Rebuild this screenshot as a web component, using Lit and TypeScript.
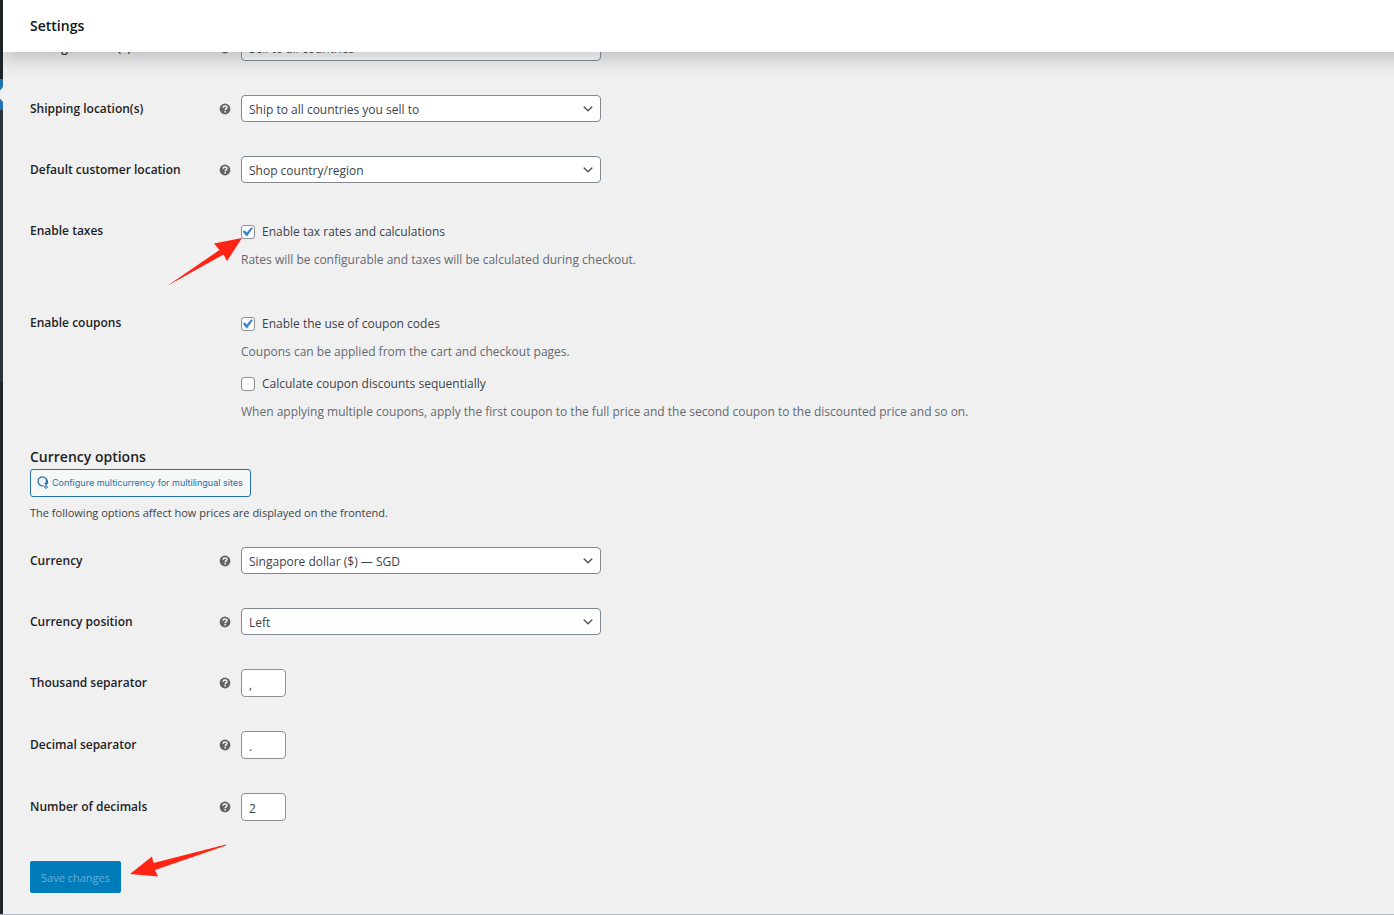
import { LitElement, html, css, svg, nothing, TemplateResult } from "lit";
import { customElement } from "lit/decorators.js";

interface Field {
  id: string;
  label: string;
  value: string;
  kind: "select" | "text";
}

const locationFields: Field[] = [
  { id: "selling", label: "Selling location(s)", value: "Sell to all countries", kind: "select" },
  { id: "shipping", label: "Shipping location(s)", value: "Ship to all countries you sell to", kind: "select" },
  { id: "customer", label: "Default customer location", value: "Shop country/region", kind: "select" },
];

const currencyFields: Field[] = [
  { id: "currency", label: "Currency", value: "Singapore dollar ($) — SGD", kind: "select" },
  { id: "position", label: "Currency position", value: "Left", kind: "select" },
  { id: "thousand", label: "Thousand separator", value: ",", kind: "text" },
  { id: "decimal", label: "Decimal separator", value: ".", kind: "text" },
  { id: "decimals", label: "Number of decimals", value: "2", kind: "text" },
];

@customElement("app-root")
export class AppRoot extends LitElement {
  static styles = css`
    :host {
      display: grid;
      grid-template-columns: 3px minmax(0, 1fr);
      min-height: 100vh;
      box-sizing: border-box;
      border-bottom: 1px solid #b1b8c4;
      background: #f0f0f0;
      color: #3c434a;
      font-family: "Open Sans", "Noto Sans", sans-serif;
      font-size: 12px;
      line-height: 20px;
    }
    * {
      box-sizing: border-box;
    }
    .rail {
      display: flex;
      flex-direction: column;
      background: #1d2327;
    }
    .rail-top {
      height: 79px;
    }
    .rail-current {
      height: 31px;
      display: block;
      width: 3px;
    }
    .rail-submenu {
      height: 272px;
      background: #2c3338;
    }
    .page {
      min-width: 0;
      overflow: hidden;
    }
    .header {
      position: relative;
      z-index: 1;
      display: flex;
      align-items: center;
      height: 52px;
      /* Runs past the right edge so that the shadow does not fade there. */
      margin-right: -24px;
      padding: 0 27px;
      background: #fff;
      box-shadow: 0 8px 16px 0 rgba(85, 93, 102, 0.3);
    }
    .title {
      margin: 0;
      font-size: 14px;
      font-weight: 600;
      color: #101517;
    }
    .form {
      /* The list is scrolled part of the way under the header. */
      margin-top: -18px;
      padding: 0 27px 21px;
    }
    .group {
      display: grid;
      row-gap: 34px;
    }
    .row {
      display: grid;
      grid-template-columns: 189px 22px minmax(0, 1fr);
      align-items: center;
    }
    .checks {
      align-items: start;
      padding: 3px 0 5px;
    }
    .name {
      font-weight: 600;
      color: #1d2327;
    }
    .checks .name {
      line-height: 22px;
    }
    .help {
      display: block;
      width: 12px;
      height: 12px;
    }
    .options {
      grid-column: 3;
      display: grid;
      row-gap: 10px;
    }
    .option {
      display: grid;
      row-gap: 6px;
    }
    .choice {
      position: relative;
      display: flex;
      align-items: center;
      gap: 7px;
      height: 24px;
    }
    .note {
      margin: 0;
      color: #646970;
    }
    .box {
      appearance: none;
      flex: none;
      width: 14px;
      height: 14px;
      margin: 0;
      border: 1px solid #8c8f94;
      border-radius: 3px;
      background: #fff;
    }
    .box:checked {
      background: #fff
        url("data:image/svg+xml,%3Csvg xmlns='http://www.w3.org/2000/svg' viewBox='0 0 20 20'%3E%3Cpath d='M14.83 4.89l1.34.94-5.81 8.38H9.02L5.78 9.67l1.34-1.25 2.57 2.4z' fill='%233582c4' stroke='%233582c4' stroke-width='.5'/%3E%3C/svg%3E")
        -4px -3px / 18px no-repeat;
    }
    .select,
    .text {
      display: block;
      margin: 0;
      border: 1px solid #8c8f94;
      border-radius: 4px;
      background: #fff;
      color: #3c434a;
      font: inherit;
    }
    .select {
      appearance: none;
      width: 360px;
      max-width: 100%;
      height: 27px;
      padding: 3px 24px 0 7px;
      border-color: #7e8993;
      background: #fff
        url("data:image/svg+xml,%3Csvg xmlns='http://www.w3.org/2000/svg' viewBox='0 0 20 20'%3E%3Cpath d='M5 6l5 5 5-5 2 1-7 7-7-7 2-1z' fill='%23555'/%3E%3C/svg%3E")
        right 5px center / 14px no-repeat;
    }
    .text {
      width: 45px;
      height: 28px;
      padding: 2px 7px 0;
    }
    .heading {
      margin: 20px 0 2px;
      font-size: 14px;
      line-height: 20px;
      font-weight: 600;
      color: #1d2327;
    }
    .configure {
      display: inline-flex;
      align-items: center;
      gap: 3px;
      height: 28px;
      padding: 0 7px 1px 6px;
      border: 1px solid #2271b1;
      border-radius: 3px;
      background: #f6f7f7;
      color: #2271b1;
      font-family: "Inter", "Open Sans", sans-serif;
      font-size: 9px;
      text-decoration: none;
      vertical-align: top;
    }
    .logo {
      width: 12px;
      height: 13px;
    }
    .intro {
      margin: 6px 0 24px;
      font-size: 11px;
    }
    .actions {
      position: relative;
      margin-top: 40px;
    }
    .save {
      display: block;
      height: 32px;
      padding: 2px 11px 0;
      border: 0;
      border-radius: 2px;
      background: #007cba;
      color: #66b0d6;
      font: inherit;
      font-size: 11px;
    }
    .arrow {
      position: absolute;
      display: block;
      fill: #ff2414;
      pointer-events: none;
    }
    .arrow-tax {
      left: -74px;
      top: 17px;
    }
    .arrow-save {
      left: 100px;
      top: -17px;
    }
  `;

  private help(): TemplateResult {
    return html`<svg class="help" viewBox="0 0 20 20" role="img" aria-label="Help">
      <circle cx="10" cy="10" r="9" fill="#646464"></circle>
      <path
        fill="none"
        stroke="#f0f0f0"
        stroke-width="2.6"
        d="M6.800 7.800c.1-1.800 1.300-2.700 3.200-2.700s3.200.9 3.200 2.500c0 2-2.900 2-2.900 4.300M10.300 13.400v2.500"
      ></path>
    </svg>`;
  }

  private row(f: Field): TemplateResult {
    return html`<div class="row">
      <label class="name" for=${f.id}>${f.label}</label>
      ${this.help()}
      ${f.kind === "select"
        ? html`<select class="select" id=${f.id}>
            <option>${f.value}</option>
          </select>`
        : html`<input class="text" id=${f.id} type="text" .value=${f.value} />`}
    </div>`;
  }

  private option(id: string, label: string, note: string, checked: boolean, arrow: unknown = nothing): TemplateResult {
    return html`<div class="option">
      <div class="choice">
        <input class="box" type="checkbox" id=${id} .checked=${checked} />
        <label for=${id}>${label}</label>
        ${arrow}
      </div>
      <p class="note">${note}</p>
    </div>`;
  }

  render() {
    const taxArrow = html`<svg class="arrow arrow-tax" width="76" height="50" viewBox="0 0 76 50" aria-hidden="true">
      ${svg`<path d="M75 1 L47 6.500 L52.500 13 L0 49 L56.500 17.500 L60 24 Z"></path>`}
    </svg>`;

    return html`
      <div class="rail">
        <div class="rail-top"></div>
        <svg class="rail-current" width="3" height="31" viewBox="0 0 3 31" aria-hidden="true">
          <path fill="#2271b1" d="M0 0h3v31H0z"></path>
          <path fill="#f0f0f0" d="M3 8v15L0 19.500v-8z"></path>
        </svg>
        <div class="rail-submenu"></div>
      </div>
      <div class="page">
        <header class="header"><h1 class="title">Settings</h1></header>
        <form class="form" @submit=${(e: Event) => e.preventDefault()}>
          <div class="group">
            ${locationFields.map((f) => this.row(f))}
            <div class="row checks">
              <span class="name">Enable taxes</span>
              <div class="options">
                ${this.option(
                  "taxes",
                  "Enable tax rates and calculations",
                  "Rates will be configurable and taxes will be calculated during checkout.",
                  true,
                  taxArrow
                )}
              </div>
            </div>
            <div class="row checks">
              <span class="name">Enable coupons</span>
              <div class="options">
                ${this.option(
                  "coupons",
                  "Enable the use of coupon codes",
                  "Coupons can be applied from the cart and checkout pages.",
                  true
                )}
                ${this.option(
                  "sequential",
                  "Calculate coupon discounts sequentially",
                  "When applying multiple coupons, apply the first coupon to the full price and the second coupon to the discounted price and so on.",
                  false
                )}
              </div>
            </div>
          </div>

          <h2 class="heading">Currency options</h2>
          <a class="configure" href="#">
            <svg class="logo" viewBox="0 0 12 13" aria-hidden="true">
              <path
                fill="none"
                stroke="#2271b1"
                stroke-width="1.300"
                d="M6.500 9.700A4.500 4.500 0 1 1 10 5.500"
              ></path>
              <path fill="#2271b1" d="M8.600 2.300c1.700.9 2.600 2.500 2.400 4.500-.1 1-.7 1.700-1.400 2.200L6.600 7.600c1.500-.3 2.300-1.100 2.300-2.700z"></path>
              <circle cx="9" cy="11" r="1.300" fill="none" stroke="#2271b1"></circle>
            </svg>
            Configure multicurrency for multilingual sites
          </a>
          <p class="intro">The following options affect how prices are displayed on the frontend.</p>

          <div class="group">${currencyFields.map((f) => this.row(f))}</div>

          <div class="actions">
            <button class="save" type="submit">Save changes</button>
            <svg class="arrow arrow-save" width="97" height="34" viewBox="0 0 97 34" aria-hidden="true">
              <path d="M0 30 L22 12.500 L23.500 19 L96 0.500 L96 1.500 L25 26 L28 32.500 Z"></path>
            </svg>
          </div>
        </form>
      </div>
    `;
  }
}
